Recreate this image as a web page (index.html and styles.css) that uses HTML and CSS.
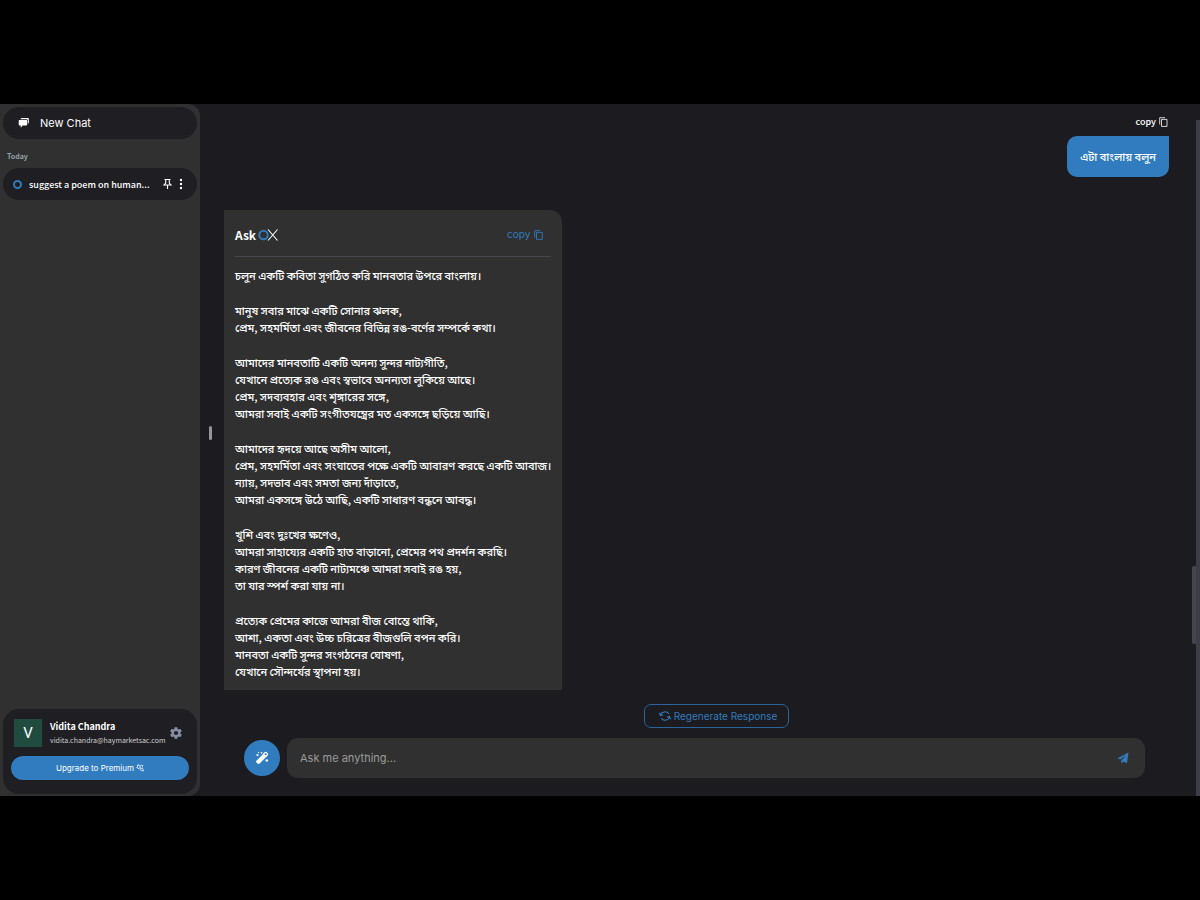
FILE: index.html
```html
<!DOCTYPE html>
<html lang="en">
<head>
    <meta charset="UTF-8">
    <meta name="viewport" content="width=device-width, initial-scale=1.0">
    <title>AskOX Chat</title>
    <link rel="stylesheet" href="styles.css">
</head>
<body>
    <div class="app">

        <!-- Sidebar -->
        <aside class="sidebar">
            <button type="button" class="new-chat">
                <svg width="12" height="12" viewBox="0 0 12 12" fill="currentColor">
                    <path d="M3.5 1h6.5q.8 0 .8.8v4q0 .8-.8.8h-.2V3.200q0-.9-.9-.9H2.700v-.5q0-.8.8-.8z"/>
                    <path d="M1.500 2.900h6.900q.8 0 .8.8v3.900q0 .8-.8.8H4.700L2.700 10.700V8.400H1.500q-.8 0-.8-.8V3.700q0-.8.8-.8z"/>
                </svg>
                New Chat
            </button>

            <h2 class="day">Today</h2>
            <div class="chat-item">
                <span class="ring"></span>
                <a href="#" class="chat-title">suggest a poem on human...</a>
                <button type="button" class="icon-btn" aria-label="Pin chat">
                    <svg width="9" height="12" viewBox="0 0 9 12" fill="none" stroke="currentColor" stroke-width="1.1">
                        <path d="M1.500 1.500h6M2.700 1.500v3.500L1 7h7L6.300 5V1.500M4.500 7v4"/>
                    </svg>
                </button>
                <button type="button" class="icon-btn" aria-label="More">
                    <svg width="4" height="12" viewBox="0 0 4 12" fill="currentColor">
                        <circle cx="2" cy="2" r="1.2"/>
                        <circle cx="2" cy="6" r="1.2"/>
                        <circle cx="2" cy="10" r="1.2"/>
                    </svg>
                </button>
            </div>

            <div class="account">
                <div class="user">
                    <div class="avatar">V</div>
                    <div class="user-info">
                        <div class="user-name">Vidita Chandra</div>
                        <div class="user-email">vidita.chandra@haymarketsac.com</div>
                    </div>
                    <button type="button" class="icon-btn settings" aria-label="Settings">
                        <svg width="14" height="14" viewBox="0 0 24 24" fill="currentColor">
                            <path d="M19.400 13a7.500 7.500 0 0 0 0-2l2.200-1.700a.5.5 0 0 0 .1-.6l-2-3.500a.5.5 0 0 0-.6-.2l-2.600 1a7.700 7.700 0 0 0-1.700-1l-.4-2.600a.5.5 0 0 0-.5-.4h-4a.5.5 0 0 0-.5.4L9 5a7.700 7.700 0 0 0-1.700 1l-2.500-1a.5.5 0 0 0-.6.2l-2 3.500a.5.5 0 0 0 .1.600L4.500 11a7.500 7.500 0 0 0 0 2l-2.200 1.700a.5.5 0 0 0-.1.600l2 3.500c.1.200.4.300.6.200l2.500-1a7.700 7.700 0 0 0 1.700 1l.4 2.600c0 .2.200.4.500.4h4c.3 0 .5-.2.5-.4l.4-2.600a7.700 7.700 0 0 0 1.700-1l2.600 1c.2.100.5 0 .6-.2l2-3.500a.5.500 0 0 0-.1-.6zM12 15.600a3.600 3.600 0 1 1 0-7.200 3.600 3.600 0 0 1 0 7.200z"/>
                        </svg>
                    </button>
                </div>
                <button type="button" class="upgrade">
                    Upgrade to Premium
                    <svg width="8" height="8" viewBox="0 0 8 8" fill="none" stroke="currentColor" stroke-width="0.7">
                        <path d="M2.500.6l.7 1.200 1.300-.3-.6 1.300.8 1-1.400.1-.7 1.200-.6-1.300L.6 3.500l1-.9-.4-1.300 1.200.3zM5 1l2 .8-1 1.400M4 5l2.500-1L7.500 7 5 6.500z"/>
                    </svg>
                </button>
            </div>
        </aside>

        <div class="resizer"><span></span></div>

        <!-- Conversation -->
        <main class="chat">
            <div class="messages">
                <div class="question">
                    <button type="button" class="copy">
                        copy
                        <svg width="9" height="10" viewBox="0 0 9 10" fill="none" stroke="currentColor" stroke-width="0.8">
                            <path d="M.7 7.500V.7H6M2.500 2.400h5.500v7H2.500z"/>
                        </svg>
                    </button>
                    <p class="bubble" lang="bn">এটা বাংলায় বলুন</p>
                </div>

                <article class="answer">
                    <header class="answer-header">
                        <div class="logo">
                            Ask
                            <svg width="21" height="14" viewBox="0 0 21 14" fill="none">
                                <circle cx="5.500" cy="7" r="4.200" stroke="#2f7bbd" stroke-width="2"/>
                                <path d="M10 1.500l9.500 11M19.500 1.500l-9.500 11" stroke="#fff" stroke-width="1.1"/>
                            </svg>
                        </div>
                        <button type="button" class="copy copy-blue">
                            copy
                            <svg width="9" height="10" viewBox="0 0 9 10" fill="none" stroke="currentColor" stroke-width="0.9">
                                <path d="M.7 7.500V.7H6M2.500 2.400h5.800v7H2.500z"/>
                            </svg>
                        </button>
                    </header>
                    <div class="poem" lang="bn">
                        <p>চলুন একটি কবিতা সুগঠিত করি মানবতার উপরে বাংলায়।</p>
                        <p>মানুষ সবার মাঝে একটি সোনার ঝলক,<br>
                        প্রেম, সহমর্মিতা এবং জীবনের বিভিন্ন রঙ-বর্ণের সম্পর্কে কথা।</p>
                        <p>আমাদের মানবতাটি একটি অনন্য সুন্দর নাট্যগীতি,<br>
                        যেখানে প্রত্যেক রঙ এবং স্বভাবে অনন্যতা লুকিয়ে আছে।<br>
                        প্রেম, সদব্যবহার এবং শৃঙ্গারের সঙ্গে,<br>
                        আমরা সবাই একটি সংগীতযন্ত্রের মত একসঙ্গে ছড়িয়ে আছি।</p>
                        <p>আমাদের হৃদয়ে আছে অসীম আলো,<br>
                        প্রেম, সহমর্মিতা এবং সংঘাতের পক্ষে একটি আবারণ করছে একটি আবাজ।<br>
                        ন্যায়, সদভাব এবং সমতা জন্য দাঁড়াতে,<br>
                        আমরা একসঙ্গে উঠে আছি, একটি সাধারণ বন্ধনে আবদ্ধ।</p>
                        <p>খুশি এবং দুঃখের ক্ষণেও,<br>
                        আমরা সাহায্যের একটি হাত বাড়ানো, প্রেমের পথ প্রদর্শন করছি।<br>
                        কারণ জীবনের একটি নাট্যমঞ্চে আমরা সবাই রঙ হয়,<br>
                        তা যার স্পর্শ করা যায় না।</p>
                        <p>প্রত্যেক প্রেমের কাজে আমরা বীজ বোন্তে থাকি,<br>
                        আশা, একতা এবং উচ্চ চরিত্রের বীজগুলি বপন করি।<br>
                        মানবতা একটি সুন্দর সংগঠনের ঘোষণা,<br>
                        যেখানে সৌন্দর্যের স্থাপনা হয়।</p>
                    </div>
                </article>
            </div>

            <button type="button" class="regenerate">
                <svg width="12" height="12" viewBox="0 0 13 12" fill="none" stroke="currentColor" stroke-width="1.1">
                    <path d="M1.500 5.500A5 4.500 0 0 1 10.800 3.800M11.500 6.500A5 4.500 0 0 1 2.500 8.600M.5 2.500l1 3.200 3-1M12.500 9.500l-1-3.200-3 1"/>
                </svg>
                Regenerate Response
            </button>

            <form class="composer">
                <button type="button" class="magic" aria-label="Prompt ideas">
                    <svg width="14" height="14" viewBox="0 0 14 14" fill="currentColor">
                        <path d="M1.400 9.700l6.500-6.500 3 3-6.500 6.500q-1 .8-1.900-.1l-1-1q-.9-.9-.1-1.900z"/>
                        <path d="M8.500 3.300l1.500-1.500q.8-.7 1.600.1l.5.500q.8.800.1 1.600L10.700 5.500z" fill="none" stroke="currentColor" stroke-width="1.3"/>
                        <path d="M6.500.4l.4 1 1 .4-1 .4-.4 1-.4-1-1-.4 1-.4z"/>
                        <circle cx="2.500" cy="4" r="1.1"/>
                        <circle cx="11.800" cy="9.500" r="1.3"/>
                        <circle cx="3.600" cy="1.600" r=".6"/>
                    </svg>
                </button>
                <div class="input-box">
                    <input type="text" placeholder="Ask me anything..." aria-label="Ask me anything">
                    <button type="submit" class="icon-btn send" aria-label="Send">
                        <svg width="12" height="12" viewBox="0 0 12 12" fill="currentColor">
                            <path d="M11.500.5L.5 6.300l2.700 1.300L9.300 3 4.300 8.600v2.900l1.800-1.800 3.900 1.300z"/>
                        </svg>
                    </button>
                </div>
            </form>
        </main>

        <div class="scroll-thumb"></div>
        <div class="scroll-track"></div>
    </div>
</body>
</html>
```

FILE: styles.css
```css
* {
    box-sizing: border-box;
}

body {
    margin: 0;
    height: 100vh;
    padding: 104px 0;
    background: #000;
    color: #fff;
    font-family: "Noto Sans CJK SC", "Noto Sans", sans-serif;
}

h2, p {
    margin: 0;
}

button {
    padding: 0;
    border: none;
    background: none;
    color: inherit;
    font-family: inherit;
    cursor: pointer;
}

svg {
    display: block;
    flex-shrink: 0;
}

.app {
    display: flex;
    height: 100%;
    background: #1c1b20;
}

/* Sidebar */
.sidebar {
    width: 200px;
    flex-shrink: 0;
    display: flex;
    flex-direction: column;
    padding: 3px 3px 2px;
    background: #303030;
    border-radius: 0 12px 12px 0;
}

.new-chat {
    display: flex;
    align-items: center;
    gap: 10px;
    height: 32px;
    padding: 0 15px;
    border-radius: 16px;
    background: #1e1e23;
    font-family: Inter, sans-serif;
    font-size: 11px;
}

.day {
    margin: 11px 0 6px 4px;
    font-size: 7px;
    line-height: 12px;
    font-weight: 700;
    color: #93a1a9;
}

.chat-item {
    display: flex;
    align-items: center;
    gap: 7px;
    height: 32px;
    padding: 0 14px 0 10px;
    border-radius: 16px;
    background: #1e1e23;
}

.ring {
    flex-shrink: 0;
    width: 9px;
    height: 9px;
    border: 2px solid #2f7bbd;
    border-radius: 50%;
}

.chat-title {
    flex: 1;
    color: #fff;
    font-size: 9px;
    font-weight: 500;
    text-decoration: none;
    white-space: nowrap;
}

.account {
    margin-top: auto;
    height: 85px;
    padding: 10px 8px;
    border-radius: 16px;
    background: #1e1e23;
}

.user {
    display: flex;
    align-items: center;
    padding: 0 6px 0 3px;
}

.avatar {
    flex-shrink: 0;
    width: 28px;
    height: 28px;
    margin-right: 8px;
    background: #204c40;
    font-family: Roboto, sans-serif;
    font-size: 15px;
    line-height: 28px;
    text-align: center;
}

.user-info {
    flex: 1;
    min-width: 0;
    white-space: nowrap;
}

.user-name {
    font-size: 9px;
    line-height: 14px;
    font-weight: 700;
}

.user-email {
    font-size: 7px;
    line-height: 12px;
    color: #d0d0d0;
}

.settings {
    color: #8790a2;
}

.upgrade {
    display: flex;
    align-items: center;
    justify-content: center;
    gap: 2px;
    width: 100%;
    height: 24px;
    margin-top: 9px;
    border-radius: 12px;
    background: #317cbe;
    font-family: Inter, sans-serif;
    font-size: 8px;
}

.resizer {
    display: flex;
    align-items: center;
    justify-content: center;
    width: 21px;
    padding-bottom: 34px;
}

.resizer span {
    width: 3px;
    height: 14px;
    border-radius: 2px;
    background: #96969a;
}

/* Conversation */
.chat {
    flex: 1;
    display: flex;
    flex-direction: column;
    min-width: 0;
    padding: 0 23px 18px 3px;
}

.messages {
    flex: 1;
    min-height: 0;
    overflow: hidden;
    padding-top: 10px;
}

.question {
    display: flex;
    flex-direction: column;
    align-items: flex-end;
    gap: 7px;
}

.copy {
    display: flex;
    align-items: center;
    gap: 3px;
    font-size: 9px;
    line-height: 15px;
    font-weight: 500;
}

.question .copy {
    padding-right: 1px;
}

.bubble {
    padding: 12px 13px;
    border-radius: 10px 0 10px 10px;
    background: #317cbe;
    font-family: "Noto Sans CJK SC", "Noto Sans Bengali", sans-serif;
    font-size: 11px;
    line-height: 17px;
    font-weight: 500;
}

.answer {
    width: fit-content;
    min-width: 337px;
    margin-top: 33px;
    padding: 14px 11px 10px;
    border-radius: 0 12px 0 0;
    background: #303030;
}

.answer-header {
    display: flex;
    align-items: center;
    justify-content: space-between;
    height: 33px;
    padding: 0 8px 11px 0;
    border-bottom: 1px solid #47484c;
}

.logo {
    display: flex;
    align-items: center;
    gap: 2px;
    font-size: 12px;
    font-weight: 700;
}

.copy-blue {
    gap: 4px;
    color: #317cbe;
    font-family: Inter, sans-serif;
    font-size: 10px;
    font-weight: 400;
}

.poem {
    padding-top: 10px;
    font-family: "Noto Sans CJK SC", "Noto Sans Bengali", sans-serif;
    font-size: 11px;
    line-height: 17px;
    font-weight: 500;
    white-space: nowrap;
}

.poem p + p {
    margin-top: 18px;
}

.regenerate {
    display: flex;
    align-items: center;
    align-self: center;
    gap: 3px;
    height: 24px;
    margin: 14px 0 10px 40px;
    padding: 0 11px 0 14px;
    border: 1px solid #2b659b;
    border-radius: 7px;
    color: #317cbe;
    font-family: Inter, sans-serif;
    font-size: 10px;
}

.composer {
    display: flex;
    align-items: center;
    gap: 7px;
    padding-left: 20px;
    margin-right: 24px;
}

.magic {
    display: flex;
    align-items: center;
    justify-content: center;
    width: 36px;
    height: 36px;
    border-radius: 50%;
    background: #317cbe;
}

.input-box {
    flex: 1;
    display: flex;
    align-items: center;
    height: 40px;
    padding: 0 16px 0 13px;
    border-radius: 11px;
    background: #303030;
}

.input-box input {
    flex: 1;
    padding: 0;
    border: none;
    outline: none;
    background: none;
    color: #fff;
    font-family: Inter, sans-serif;
    font-size: 11px;
}

.input-box input::placeholder {
    color: #9b9b9b;
}

.send {
    color: #317cbe;
}

/* Scrollbar */
.scroll-thumb {
    align-self: flex-end;
    width: 4px;
    height: 78px;
    margin-bottom: 152px;
    border-radius: 2px 0 0 2px;
    background: #454550;
}

.scroll-track {
    width: 4px;
    margin-top: 16px;
    background: #3d3d47;
}
```
